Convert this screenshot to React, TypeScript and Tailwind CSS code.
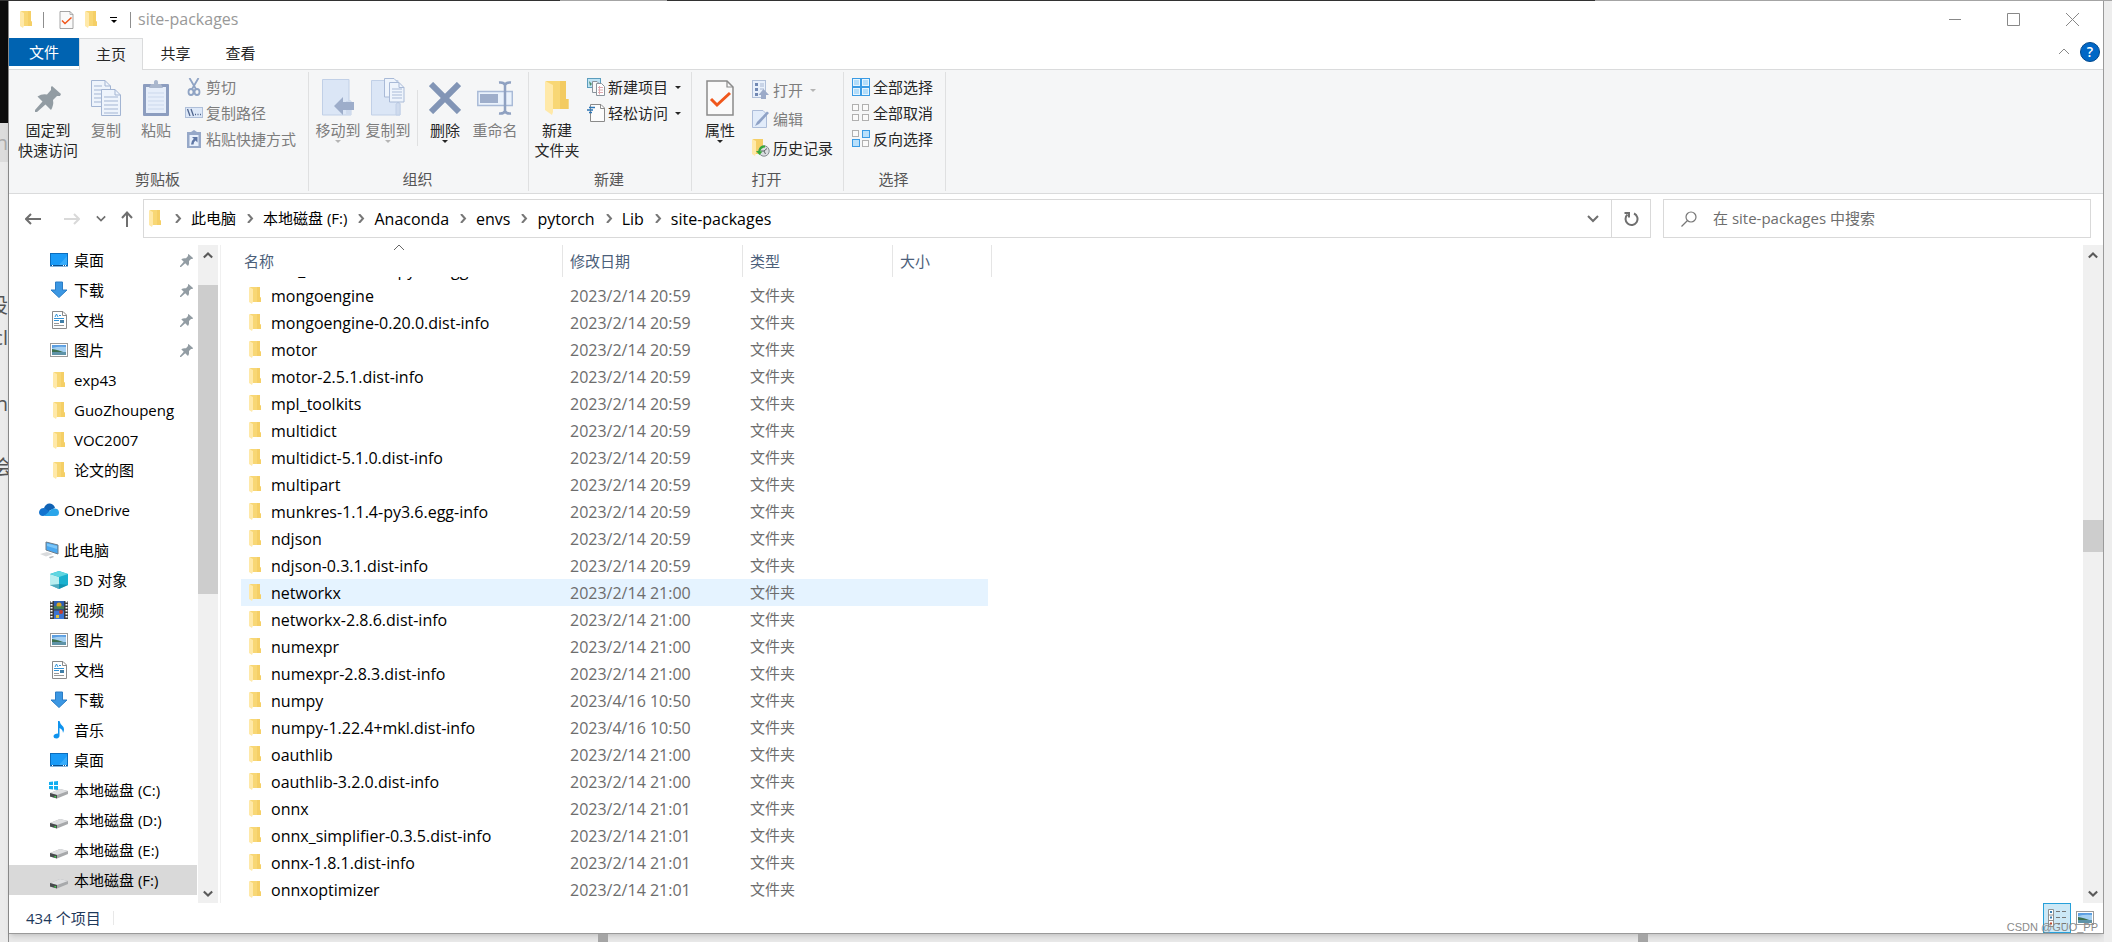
import type { ReactNode } from "react";

type IconProps = { className?: string };

const FolderIcon = ({ className = "w-3 h-[17px]" }: IconProps) => (
    <svg viewBox="0 0 12 17" className={className}>
        <path d="M1 0H11V10.5H12V15H4Z" fill="#f8d775" />
        <path d="M8 0H11V10.5H12V15H8Z" fill="#f5cf66" />
        <path d="M0 0L4 2V14.5L3 17L0 15Z" fill="#ffe9a9" />
    </svg>
);

const LargeFolderIcon = () => (
    <svg viewBox="0 0 24 36" className="w-6 h-9">
        <path d="M1 1H21V19H23.5V29H7Z" fill="#f8d775" />
        <path d="M15 1H21V19H23.5V29H15Z" fill="#f3cb62" />
        <path d="M0 1L8 5V32L7 35L0 30Z" fill="#ffe9a9" />
    </svg>
);

const CheckDocIcon = ({ className }: IconProps) => (
    <svg viewBox="0 0 28 36" className={className} fill="none">
        <path d="M1 1H21L27 7V35H1Z" fill="#fafafa" stroke="#8a8a8a" strokeWidth="1.5" />
        <path d="M21 1V7H27" stroke="#8a8a8a" strokeWidth="1.2" />
        <path d="M5 19L11 25L24 13" stroke="#f0571c" strokeWidth="3" />
    </svg>
);

const PinIcon = ({ className }: IconProps) => (
    <svg viewBox="0 0 26 26" className={className} fill="#929ca3">
        <path d="M17 0L26 8L25 10L22 10L18 14Q19 19 16 24L10.5 18.5L2 26L0 26L0 24L7.5 15.5L2.5 10.5Q7 7.5 12 8.5L16 4L16 1Z" />
    </svg>
);

const CopyIcon = () => (
    <svg viewBox="0 0 30 36" className="w-[30px] h-9" fill="#eef4fc" stroke="#a3b5d3">
        <path d="M.5.5H14L19.5 6V26.5H.5Z" />
        <path d="M14 .5V6H19.5M3 6H11M3 10H11M3 14H11M3 18H11M3 22H11" fill="none" />
        <path d="M10.5 9.5H24L29.5 15V35.5H10.5Z" />
        <path d="M24 9.5V15H29.5M13 17H27M13 21H27M13 25H27M13 29H27M13 33H27" fill="none" />
    </svg>
);

const PasteIcon = () => (
    <svg viewBox="0 0 26 36" className="w-[26px] h-9">
        <rect y="4" width="26" height="32" rx="1" fill="#8c9dbf" />
        <rect x="3" y="7" width="20" height="26" fill="#e6eefa" />
        <path d="M5 13H21M5 17H21M5 21H21M5 25H21M5 29H21" stroke="#cbd8ec" />
        <path d="M6 8L8 4H11Q10.5 0 13 0T15 4H18L20 8Z" fill="#aab7cd" />
    </svg>
);

const ScissorsIcon = () => (
    <svg viewBox="0 0 18 18" className="w-[18px] h-[18px]" fill="none" stroke="#8fa3c4">
        <path d="M4.5 0L11.5 12M13.5 0L6.5 12" strokeWidth="1.8" />
        <ellipse cx="6" cy="14" rx="2.5" ry="3" strokeWidth="1.8" />
        <ellipse cx="12" cy="14" rx="2.5" ry="3" strokeWidth="1.8" />
    </svg>
);

const CopyPathIcon = () => (
    <svg viewBox="0 0 18 18" className="w-[18px] h-[18px]">
        <rect x=".5" y="3.5" width="17" height="10" fill="#dde8f8" stroke="#afbfd9" />
        <path d="M2.5 5L5 12M6 5L8.5 12" stroke="#51668f" strokeWidth="1.3" />
        <path d="M10 10.5h1M12.5 10.5h1M15 10.5h1" stroke="#51668f" strokeWidth="1.3" />
    </svg>
);

const PasteShortcutIcon = () => (
    <svg viewBox="0 0 18 18" className="w-[18px] h-[18px]">
        <path d="M2 2H6L9 0L12 2H16V18H2Z" fill="#96a8c8" />
        <rect x="4.5" y="5" width="9" height="11" fill="#e8f0fb" />
        <path d="M7 7H12.5V12.5L10.5 10.5Q8.5 12 8.5 14.5H6Q6 11 8.8 8.8Z" fill="#5f77a5" />
    </svg>
);

const MoveToIcon = () => (
    <svg viewBox="0 0 32 38" className="w-8 h-[38px]">
        <path d="M.5 1.5H27V23H29V37H.5Z" fill="#dbe6f6" stroke="#c1d0e7" />
        <path d="M24 23H29V37H24Z" fill="#cfdbee" />
        <path d="M12 28L21 19V24H32V32H21V37Z" fill="#9dadca" />
    </svg>
);

const CopyToIcon = () => (
    <svg viewBox="0 0 34 38" className="w-[34px] h-[38px]" stroke="#a9bad7">
        <path d="M.5 2.5H27V25H29V37H.5Z" fill="#dbe6f6" stroke="#c1d0e7" />
        <path d="M25 37V26Q27 23 29 26V37Z" fill="#cfdbee" stroke="#c1d0e7" />
        <path d="M13.5.5H23L27.5 5V19H13.5Z" fill="#eef4fc" />
        <path d="M18.5 4.5H28L33 9.5V24H18.5Z" fill="#eef4fc" />
        <path d="M28 4.5V9.5H33M21 11H31M21 14H31M21 17H31M21 20H31" fill="none" />
    </svg>
);

const DeleteIcon = () => (
    <svg viewBox="0 0 32 32" className="w-8 h-8 mb-0.5">
        <path d="M2 2L30 30M30 2L2 30" stroke="#8295b6" strokeWidth="6" />
    </svg>
);

const RenameIcon = () => (
    <svg viewBox="0 0 36 34" className="w-9 h-[34px] mb-px">
        <rect x=".8" y="10.5" width="34.5" height="14" fill="#eaf2fc" stroke="#a9bad7" strokeWidth="1.5" />
        <rect x="3" y="13" width="18" height="9" fill="#9eaecb" />
        <path d="M22 1.5Q27 1 28 4Q29 1 34 1.5M28 4V30M22 32.5Q27 33 28 30Q29 33 34 32.5" fill="none" stroke="#8fa1c1" strokeWidth="2.5" />
    </svg>
);

const NewItemIcon = () => (
    <svg viewBox="0 0 18 18" className="w-[18px] h-[18px]" stroke="#8b949c">
        <rect x=".5" y=".5" width="13" height="9" fill="#bfe3f4" stroke="#5b9dbd" />
        <path d="M2 3L5 6L3 8Z" fill="#4e8f6a" stroke="none" />
        <path d="M5.5 3.5H10L12.5 6V14.5H5.5Z" fill="#f8f8f8" />
        <path d="M9.5 5.5H14.5L17.5 8.5V17.5H9.5Z" fill="#fff" />
        <path d="M11 9.5H16M11 12H16M11 14.5H16M12.5 8V16.5" stroke="#dfa9ae" />
    </svg>
);

const EasyAccessIcon = () => (
    <svg viewBox="0 0 18 18" className="w-[18px] h-[18px]" fill="none">
        <path d="M3.5.5H14L17.5 4V17.5H3.5Z" fill="#fcfcfc" stroke="#8a8a8a" />
        <path d="M13.5.5V4.5H17.5" stroke="#8a8a8a" />
        <path d="M2 3.5H8M0 6H6M2 8.5H5" stroke="#2d76b5" strokeWidth="1.5" />
    </svg>
);

const OpenIcon = () => (
    <svg viewBox="0 0 18 20" className="w-[18px] h-5">
        <rect x=".5" y=".5" width="13" height="17" fill="#e8f0fb" stroke="#b0bfd8" />
        <path d="M3 3H6V6H3ZM3 8H6V11H3ZM3 13H6V16H3Z" fill="#7188b3" />
        <path d="M8 4H12M8 6H12M8 9H12" stroke="#a9b8d3" />
        <path d="M11.5 9L17 15H14V19H9V15H6.5Z" fill="#9baac8" />
    </svg>
);

const EditIcon = () => (
    <svg viewBox="0 0 18 18" className="w-[18px] h-[18px]">
        <path d="M.5.5H11L14.5 4V17.5H.5Z" fill="#e2ecfa" stroke="#adbdd9" />
        <path d="M3 16L5 12L15 1.5L17 3L7 14Z" fill="#8fa2c6" />
    </svg>
);

const HistoryIcon = () => (
    <svg viewBox="0 0 18 18" className="w-[18px] h-[18px]">
        <path d="M1 0H11V15H3Z" fill="#f5cf66" />
        <path d="M0 0L4 2V14L3 17L0 15Z" fill="#ffe9a9" />
        <circle cx="12" cy="12" r="5.2" fill="#dadde0" stroke="#868c90" />
        <path d="M12 12L15 9.5M12 12H9M12 12L13.5 15" stroke="#5f6569" />
        <path d="M13 6.5Q7 6 6.5 12H4L7.5 16L10.5 12.5H8.5Q8.5 9 13 8.5Z" fill="#35a83a" />
    </svg>
);

const squares = [
    [0, 0],
    [10, 0],
    [0, 10],
    [10, 10],
];

const SelectIcon = ({ active }: { active: number[] }) => (
    <svg viewBox="0 0 18 18" className="w-[18px] h-[18px]">
        {active.length === 4 ? (
            <>
                <rect width="18" height="18" fill="#3b9be4" />
                <path d="M1 1H8V8H1ZM10 1H17V8H10ZM1 10H8V17H1ZM10 10H17V17H10Z" fill="#e6f5fe" />
                <path d="M2 2H7V7H2ZM11 2H16V7H11ZM2 11H7V16H2ZM11 11H16V16H11Z" fill="#b3ddfa" />
            </>
        ) : (
            squares.map(([x, y], i) =>
                active.includes(i) ? (
                    <rect key={i} x={x + 0.5} y={y + 0.5 - (y ? 1 : 0)} width="7" height="7" fill="#b9e0fb" stroke="#3b9be4" />
                ) : (
                    <rect key={i} x={x + 0.5} y={y + 0.5} width="6" height="6" fill="#fafafa" stroke="#b0b0b0" />
                )
            )
        )}
    </svg>
);

const DesktopIcon = () => (
    <svg viewBox="0 0 18 14" className="w-[18px] h-3.5">
        <rect x=".5" y=".5" width="17" height="12.5" fill="#1a9bf7" stroke="#0b6dbd" />
        <path d="M9 12L17 3V12Z" fill="#37acfb" />
        <path d="M1 12.5H17" stroke="#0a4f8c" />
        <path d="M2 12.5H3M13 12.5H14M15 12.5H16" stroke="#fff" />
    </svg>
);

const DownloadIcon = () => (
    <svg viewBox="0 0 18 18" className="w-[18px] h-[18px]">
        <path d="M5.5 1H12.5V9H17L9 16.5L1 9H5.5Z" fill="#3b97e3" stroke="#2b7dc6" />
    </svg>
);

const DocIcon = () => (
    <svg viewBox="0 0 18 18" className="w-[18px] h-[18px]" fill="none">
        <path d="M2.5.5H13L16.5 4V17.5H2.5Z" fill="#fff" stroke="#8b8b8b" />
        <path d="M12.5.5V4.5H16" stroke="#8b8b8b" />
        <path d="M5 6L6.5 3L8 6M9 4.5H11M4 7.5H14M4 9.5H9" stroke="#3293d8" />
        <rect x="10" y="9" width="4" height="3" fill="#3f7fa8" />
        <path d="M4 12.5H9M4 14.5H14" stroke="#9a9a9a" />
    </svg>
);

const PictureIcon = () => (
    <svg viewBox="0 0 18 14" className="w-[18px] h-3.5">
        <rect x=".5" y=".5" width="17" height="13" fill="#fff" stroke="#9b9b9b" />
        <rect x="2" y="2" width="14" height="10" fill="#a5d0f2" />
        <path d="M2 2H16V4Q9 3 2 5Z" fill="#5c9fe2" />
        <path d="M2 6Q7 6.5 16 10H2Z" fill="#3d7050" />
        <path d="M2 9H16V12H2Z" fill="#5f93a8" />
    </svg>
);

const CloudIcon = () => (
    <svg viewBox="0 0 20 14" className="w-5 h-3.5">
        <path d="M5 5Q7 0 11 .5Q15 1 16 5L8 9Z" fill="#0f62b4" />
        <path d="M4 13Q0 13 0 9Q1 4.5 5.5 5L14 11Z" fill="#1273cf" />
        <path d="M5 13L13 6Q19.5 4 20 9.5Q20 13 16.5 13Z" fill="#2aa5ea" />
    </svg>
);

const ComputerIcon = () => (
    <svg viewBox="0 0 20 18" className="w-5 h-[18px]">
        <path d="M7 1L19 4V13L7 9Z" fill="#4aa8f0" stroke="#6d7c89" />
        <path d="M8 2.5L18 5V8L8 5Z" fill="#7cc6f8" />
        <path d="M1 13L8 11L14 13L7 15.5Z" fill="#d9dbdd" />
        <path d="M10 16L14 15L15 16L11 17.5Z" fill="#b0b4b8" />
    </svg>
);

const CubeIcon = () => (
    <svg viewBox="0 0 18 18" className="w-[18px] h-[18px]">
        <path d="M0 3L9 0L18 3V14L9 18L0 14Z" fill="#1ab1cf" />
        <path d="M0 3L9 6V18L0 14Z" fill="#b9eef0" />
        <path d="M0 3L9 0L18 3L9 6Z" fill="#5fd6e0" />
        <path d="M9 13L18 14L9 18L0 14Z" fill="#0b7f9d" opacity=".6" />
    </svg>
);

const VideoIcon = () => (
    <svg viewBox="0 0 18 18" className="w-[18px] h-[18px]">
        <rect width="18" height="18" fill="#3b3b3b" />
        <path d="M1.5 0V18M16.5 0V18" stroke="#fff" strokeWidth="2" strokeDasharray="1.5 1.5" />
        <rect x="4" width="10" height="8.5" fill="#2f5fb3" />
        <rect x="4" y="9.5" width="10" height="8.5" fill="#3c74d0" />
        <circle cx="9" cy="4" r="2.5" fill="#d9a520" />
        <circle cx="11" cy="11" r="2" fill="#c63c2c" />
        <path d="M4 5H14V8H4Z" fill="#4f8a3a" opacity=".7" />
        <path d="M6 14H9V17H6Z" fill="#e2c23a" />
    </svg>
);

const MusicIcon = () => (
    <svg viewBox="0 0 18 18" className="w-[18px] h-[18px]">
        <path d="M8 0H9.5Q10 3 13 5.5Q15 8 13 12Q13 8.5 9.5 7V14.5Q9.5 17 6.5 17.5Q3.5 17.5 3.5 15Q4 12.5 8 12.5Z" fill="#0f93ee" />
    </svg>
);

const DriveIcon = ({ system = false }: { system?: boolean }) => (
    <svg viewBox="0 0 20 18" className="w-5 h-[18px]">
        <path d="M1 12L11 8L19 10V13L8 17.5L1 15.5Z" fill="#a7a9ab" />
        <path d="M1 12L11 8L19 10L8 14Z" fill="#dedfe1" />
        <path d="M1 12L8 14V17.5L1 15.5Z" fill="#484b4e" />
        <path d="M5.5 15H7V16.5H5.5Z" fill="#3fdc4a" />
        {system && <path d="M0 1L4 .5V4H0ZM5 .5L9 0V4H5ZM0 5H4V8.5L0 8ZM5 5H9V9L5 8.5Z" fill="#12aef0" />}
    </svg>
);

const DetailsViewIcon = () => (
    <svg viewBox="0 0 18 18" className="w-[18px] h-[18px]">
        <path d="M.5.5H5.5V17.5H.5ZM.5 6H5.5M.5 11.5H5.5" fill="#fff" stroke="#909090" />
        <path d="M2 3H4M2 8.5H4" stroke="#3d7fb0" strokeWidth="2" />
        <path d="M2 14.5H4" stroke="#c0492f" strokeWidth="2" />
        <path d="M8 2.5H12M14 2.5H18M8 8.5H12M14 8.5H18M8 14.5H12M14 14.5H18" stroke="#777" />
    </svg>
);

const Chevron = ({ dir, className = "", stroke = 2 }: { dir: "up" | "down" | "right"; className?: string; stroke?: number }) => {
    const paths = { up: "M1 7L6 2L11 7", down: "M1 2L6 7L11 2", right: "M4 0L8 4.5L4 9" };
    return (
        <svg viewBox="0 0 12 9" className={`w-3 h-[9px] ${className}`} fill="none" stroke="currentColor" strokeWidth={stroke}>
            <path d={paths[dir]} />
        </svg>
    );
};

const Caret = ({ className = "" }: IconProps) => (
    <svg viewBox="0 0 6 3" className={`w-1.5 h-[3px] shrink-0 ${className}`} fill="currentColor">
        <path d="M0 0H6L3 3Z" />
    </svg>
);

type BigButtonProps = {
    icon: ReactNode;
    lines: string[];
    width: string;
    disabled?: boolean;
    caret?: boolean;
};

const BigButton = ({ icon, lines, width, disabled, caret }: BigButtonProps) => (
    <button
        disabled={disabled}
        className={`flex flex-col items-center shrink-0 ${width} ${disabled ? "text-[#7d7d7d]" : "text-[#262626]"}`}
    >
        <span className="flex items-end justify-center h-11 mb-1">{icon}</span>
        {lines.map((line) => (
            <span key={line} className="leading-5 whitespace-nowrap">
                {line}
            </span>
        ))}
        {caret && <Caret className={disabled ? "text-[#b5b5b5]" : ""} />}
    </button>
);

const SmallButton = ({ icon, label, disabled, caret }: { icon: ReactNode; label: string; disabled?: boolean; caret?: boolean }) => (
    <button
        disabled={disabled}
        className={`flex items-center gap-[3px] h-[26px] whitespace-nowrap ${disabled ? "text-[#7d7d7d]" : "text-[#262626]"}`}
    >
        {icon}
        {label}
        {caret && <Caret className={disabled ? "ml-1 text-[#b5b5b5]" : "ml-1"} />}
    </button>
);

const RibbonGroup = ({ title, width, children }: { title: string; width: string; children: ReactNode }) => (
    <section className={`flex flex-col shrink-0 my-0.5 border-r border-[#dfe0e1] ${width}`}>
        <div className="flex flex-1">{children}</div>
        <div className="h-6 pr-0.5 leading-6 text-center text-[#555]">{title}</div>
    </section>
);

type NavItem = { label: string; icon: ReactNode; pinned?: boolean; root?: boolean; selected?: boolean };

const navItems: NavItem[] = [
    { label: "桌面", icon: <DesktopIcon />, pinned: true },
    { label: "下载", icon: <DownloadIcon />, pinned: true },
    { label: "文档", icon: <DocIcon />, pinned: true },
    { label: "图片", icon: <PictureIcon />, pinned: true },
    { label: "exp43", icon: <FolderIcon /> },
    { label: "GuoZhoupeng", icon: <FolderIcon /> },
    { label: "VOC2007", icon: <FolderIcon /> },
    { label: "论文的图", icon: <FolderIcon /> },
    { label: "OneDrive", icon: <CloudIcon />, root: true },
    { label: "此电脑", icon: <ComputerIcon />, root: true },
    { label: "3D 对象", icon: <CubeIcon /> },
    { label: "视频", icon: <VideoIcon /> },
    { label: "图片", icon: <PictureIcon /> },
    { label: "文档", icon: <DocIcon /> },
    { label: "下载", icon: <DownloadIcon /> },
    { label: "音乐", icon: <MusicIcon /> },
    { label: "桌面", icon: <DesktopIcon /> },
    { label: "本地磁盘 (C:)", icon: <DriveIcon system /> },
    { label: "本地磁盘 (D:)", icon: <DriveIcon /> },
    { label: "本地磁盘 (E:)", icon: <DriveIcon /> },
    { label: "本地磁盘 (F:)", icon: <DriveIcon />, selected: true },
];

const files = [
    ["mongoengine", "2023/2/14 20:59"],
    ["mongoengine-0.20.0.dist-info", "2023/2/14 20:59"],
    ["motor", "2023/2/14 20:59"],
    ["motor-2.5.1.dist-info", "2023/2/14 20:59"],
    ["mpl_toolkits", "2023/2/14 20:59"],
    ["multidict", "2023/2/14 20:59"],
    ["multidict-5.1.0.dist-info", "2023/2/14 20:59"],
    ["multipart", "2023/2/14 20:59"],
    ["munkres-1.1.4-py3.6.egg-info", "2023/2/14 20:59"],
    ["ndjson", "2023/2/14 20:59"],
    ["ndjson-0.3.1.dist-info", "2023/2/14 20:59"],
    ["networkx", "2023/2/14 21:00"],
    ["networkx-2.8.6.dist-info", "2023/2/14 21:00"],
    ["numexpr", "2023/2/14 21:00"],
    ["numexpr-2.8.3.dist-info", "2023/2/14 21:00"],
    ["numpy", "2023/4/16 10:50"],
    ["numpy-1.22.4+mkl.dist-info", "2023/4/16 10:50"],
    ["oauthlib", "2023/2/14 21:00"],
    ["oauthlib-3.2.0.dist-info", "2023/2/14 21:00"],
    ["onnx", "2023/2/14 21:01"],
    ["onnx_simplifier-0.3.5.dist-info", "2023/2/14 21:01"],
    ["onnx-1.8.1.dist-info", "2023/2/14 21:01"],
    ["onnxoptimizer", "2023/2/14 21:01"],
];

const crumbs = ["此电脑", "本地磁盘 (F:)", "Anaconda", "envs", "pytorch", "Lib", "site-packages"];

const TitleBar = () => (
    <header className="flex items-center h-[37px] pl-[11px]">
        <FolderIcon />
        <span className="w-px h-4 ml-[11px] bg-[#8e8e8e]" />
        <button aria-label="属性" className="ml-[15px]">
            <CheckDocIcon className="w-[15px] h-[18px]" />
        </button>
        <button aria-label="新建文件夹" className="ml-[11px]">
            <FolderIcon />
        </button>
        <button aria-label="自定义快速访问工具栏" className="ml-[13px] flex flex-col items-center gap-0.5 text-black">
            <span className="w-[7px] h-px bg-black" />
            <Caret />
        </button>
        <span className="w-px h-4 ml-[13px] bg-[#8e8e8e]" />
        <h1 className="ml-[7px] pb-0.5 text-base text-[#999]">site-packages</h1>
        <div className="flex items-center ml-auto pr-6 gap-[46px] text-[#888]">
            <button aria-label="最小化">
                <svg viewBox="0 0 12 12" className="w-3 h-3" stroke="currentColor"><path d="M0 5.5H12" /></svg>
            </button>
            <button aria-label="最大化">
                <svg viewBox="0 0 13 13" className="w-[13px] h-[13px]" fill="none" stroke="currentColor"><path d="M.5.5H12.5V12.5H.5Z" /></svg>
            </button>
            <button aria-label="关闭">
                <svg viewBox="0 0 13 13" className="w-[13px] h-[13px]" stroke="currentColor"><path d="M0 0L13 13M13 0L0 13" /></svg>
            </button>
        </div>
    </header>
);

const Tabs = () => (
    <nav className="flex h-8 text-[#262626] border-b border-[#dadbdc]">
        <button className="w-[70px] h-7 bg-[#0063b1] text-white">文件</button>
        <button className="w-16 h-8 border border-b-0 border-[#dadbdc] bg-[#f5f6f7]">主页</button>
        <button className="w-[65px]">共享</button>
        <button className="w-[65px]">查看</button>
        <div className="flex items-center gap-2.5 ml-auto pr-[3px] pb-1">
            <button aria-label="最小化功能区" className="text-[#888]">
                <Chevron dir="up" stroke={1} />
            </button>
            <button aria-label="帮助" className="w-5 h-5 rounded-full border border-[#00478c] bg-[#0067c6] text-white text-sm leading-4 font-semibold">
                ?
            </button>
        </div>
    </nav>
);

const Ribbon = () => (
    <div className="flex h-[124px] bg-[#f5f6f7] border-b border-[#dadbdc]">
        <RibbonGroup title="剪贴板" width="w-[300px]">
            <BigButton width="w-[70px] ml-1" lines={["固定到", "快速访问"]} icon={<PinIcon className="w-[26px] h-[26px] mb-1" />} />
            <BigButton width="w-[50px] -ml-0.5" disabled lines={["复制"]} icon={<CopyIcon />} />
            <BigButton width="w-[50px]" disabled lines={["粘贴"]} icon={<PasteIcon />} />
            <div className="flex flex-col ml-1 pt-0.5">
                <SmallButton disabled label="剪切" icon={<ScissorsIcon />} />
                <SmallButton disabled label="复制路径" icon={<CopyPathIcon />} />
                <SmallButton disabled label="粘贴快捷方式" icon={<PasteShortcutIcon />} />
            </div>
        </RibbonGroup>
        <RibbonGroup title="组织" width="w-[220px]">
            <BigButton width="w-[50px] ml-1" disabled caret lines={["移动到"]} icon={<MoveToIcon />} />
            <BigButton width="w-[50px]" disabled caret lines={["复制到"]} icon={<CopyToIcon />} />
            <span className="w-px h-14 mt-[18px] ml-1 bg-[#dfe0e1]" />
            <BigButton width="w-[50px] ml-0.5" caret lines={["删除"]} icon={<DeleteIcon />} />
            <BigButton width="w-[50px]" disabled lines={["重命名"]} icon={<RenameIcon />} />
        </RibbonGroup>
        <RibbonGroup title="新建" width="w-[163px]">
            <BigButton width="w-[50px] ml-[3px]" lines={["新建", "文件夹"]} icon={<LargeFolderIcon />} />
            <div className="flex flex-col ml-[5px] pt-0.5">
                <SmallButton caret label="新建项目" icon={<NewItemIcon />} />
                <SmallButton caret label="轻松访问" icon={<EasyAccessIcon />} />
            </div>
        </RibbonGroup>
        <RibbonGroup title="打开" width="w-[152px]">
            <BigButton width="w-[50px] ml-[3px]" caret lines={["属性"]} icon={<CheckDocIcon className="w-7 h-9" />} />
            <div className="flex flex-col gap-[3px] ml-[7px] pt-[5px]">
                <SmallButton disabled caret label="打开" icon={<OpenIcon />} />
                <SmallButton disabled label="编辑" icon={<EditIcon />} />
                <SmallButton label="历史记录" icon={<HistoryIcon />} />
            </div>
        </RibbonGroup>
        <RibbonGroup title="选择" width="w-[102px]">
            <div className="flex flex-col ml-2 pt-0.5">
                <SmallButton label="全部选择" icon={<SelectIcon active={[0, 1, 2, 3]} />} />
                <SmallButton label="全部取消" icon={<SelectIcon active={[]} />} />
                <SmallButton label="反向选择" icon={<SelectIcon active={[1, 2]} />} />
            </div>
        </RibbonGroup>
    </div>
);

const AddressBar = () => (
    <div className="flex items-center h-[51px] pr-3 pb-0.5">
        <div className="flex items-center w-[134px] pl-4 text-[#6f6f6f]">
            <button aria-label="后退">
                <svg viewBox="0 0 16 12" className="w-4 h-3" fill="none" stroke="currentColor" strokeWidth="2"><path d="M16 6H1M6 1L1 6L6 11" /></svg>
            </button>
            <button aria-label="前进" disabled className="ml-[23px] text-[#d9d9d9]">
                <svg viewBox="0 0 16 12" className="w-4 h-3" fill="none" stroke="currentColor" strokeWidth="2"><path d="M0 6H15M10 1L15 6L10 11" /></svg>
            </button>
            <button aria-label="最近位置" className="ml-4">
                <Chevron dir="down" className="w-[10px]" />
            </button>
            <button aria-label="上移" className="ml-[15px]">
                <svg viewBox="0 0 12 16" className="w-3 h-4" fill="none" stroke="currentColor" strokeWidth="2"><path d="M6 16V1.5M1 7L6 1.5L11 7" /></svg>
            </button>
        </div>
        <div className="flex flex-1 items-center h-[39px] border border-[#d9d9d9]">
            <FolderIcon className="w-3 h-[17px] ml-[5px] mr-[3px]" />
            {crumbs.map((crumb) => (
                <a key={crumb} href="#" className="flex items-center whitespace-nowrap text-base text-black">
                    <Chevron dir="right" className="ml-2 mr-[7px] text-[#777]" />
                    <span className={crumb.includes("电脑") || crumb.includes("磁盘") ? "text-[15px]" : ""}>{crumb}</span>
                </a>
            ))}
            <button aria-label="上一个位置" className="ml-auto mr-3 text-[#6f6f6f]">
                <Chevron dir="down" />
            </button>
            <button aria-label="刷新" className="flex items-center justify-center w-[39px] h-full border-l border-[#d9d9d9] text-[#6f6f6f]">
                <svg viewBox="0 0 16 16" className="w-4 h-4" fill="none" stroke="currentColor" strokeWidth="2">
                    <path d="M11 2.5A6 6 0 1 1 4.500 3.500" />
                    <path d="M1.5 2H6V6.500" />
                </svg>
            </button>
        </div>
        <label className="flex items-center w-[428px] h-[39px] ml-3 pl-[17px] gap-4 border border-[#d9d9d9]">
            <svg viewBox="0 0 16 16" className="w-4 h-4 text-[#777]" fill="none" stroke="currentColor" strokeWidth="1.2">
                <circle cx="10" cy="6" r="5" />
                <path d="M6.5 9.5L.5 15.5" />
            </svg>
            <input
                type="text"
                aria-label="搜索"
                placeholder="在 site-packages 中搜索"
                className="flex-1 outline-none placeholder:text-[#6d6d6d]"
            />
        </label>
    </div>
);

const NavPane = () => (
    <aside className="w-[188px] shrink-0">
        <ul>
            {navItems.map((item, i) => (
                <li
                    key={i}
                    className={`flex items-center h-[30px] ${item.root ? "mt-2.5 pl-[29px]" : "pl-10"} ${item.selected ? "bg-[#d9d9d9]" : ""}`}
                >
                    <span className={`flex items-center justify-center shrink-0 ${item.root ? "w-[22px] mr-1" : "w-5 mr-[5px]"}`}>{item.icon}</span>
                    <a href="#" className="leading-[30px] whitespace-nowrap text-black">
                        {item.label}
                    </a>
                    {item.pinned && <PinIcon className="w-[13px] h-[13px] ml-auto mr-1" />}
                </li>
            ))}
        </ul>
    </aside>
);

const ScrollBar = ({ offset, thumb }: { offset: string; thumb: string }) => (
    <div className="flex flex-col w-5 shrink-0 bg-[#f0f0f0] text-[#5a5a5a]">
        <span className="flex items-center justify-center h-5">
            <Chevron dir="up" className="w-[10px]" stroke={2.5} />
        </span>
        <div className={`flex-1 ${offset}`}>
            <div className={`w-full bg-[#cdcdcd] ${thumb}`} />
        </div>
        <span className="flex items-center justify-center h-5">
            <Chevron dir="down" className="w-[10px]" stroke={2.5} />
        </span>
    </div>
);

const FileTable = () => (
    <table className="table-fixed w-[751px] text-left border-separate border-spacing-0">
        <colgroup>
            <col className="w-[322px]" />
            <col className="w-[180px]" />
            <col className="w-[150px]" />
            <col className="w-[99px]" />
        </colgroup>
        <thead>
            <tr className="h-8 text-[#4c607a]">
                <th className="relative p-0 pl-[3px] font-normal border-r border-[#e5e5e5]">
                    名称
                    <Chevron dir="up" stroke={1} className="absolute left-[152px] -top-0.5 text-[#666]" />
                </th>
                <th className="p-0 pl-[7px] font-normal border-r border-[#e5e5e5]">修改日期</th>
                <th className="p-0 pl-[7px] font-normal border-r border-[#e5e5e5]">类型</th>
                <th className="p-0 pl-[7px] font-normal border-r border-[#e5e5e5]">大小</th>
            </tr>
        </thead>
        <tbody>
            <tr>
                <td colSpan={4} className="p-0">
                    {/* row scrolled halfway under the header */}
                    <div className="flex flex-col justify-end h-[5px] overflow-hidden">
                        <span className="block shrink-0 h-[25px] leading-[27px] pl-[30px] text-base text-black">mkl_random-1.1-py3.6.egg-info</span>
                    </div>
                </td>
            </tr>
            {files.map(([name, date]) => (
                <tr key={name} className={`text-[#6d6d6d] ${name === "networkx" ? "[&>td]:bg-[#e5f3ff]" : ""}`}>
                    <td className="p-0">
                        <span className="flex items-center gap-2.5 h-[27px] pl-2 text-base leading-[27px] text-black">
                            <FolderIcon />
                            <span className="pt-0.5">{name}</span>
                        </span>
                    </td>
                    <td className="p-0 pl-[7px] text-base">
                        <div className="h-[27px] leading-[29px]">{date}</div>
                    </td>
                    <td className="p-0 pl-[7px]">
                        <div className="h-[27px] leading-[27px]">文件夹</div>
                    </td>
                    <td className="p-0 border-r-4 border-transparent bg-clip-padding" />
                </tr>
            ))}
        </tbody>
    </table>
);

const StatusBar = () => (
    <footer className="flex items-center h-[30px] pl-[17px] pr-[9px] text-[#1e395b]">
        <span>434 个项目</span>
        <span className="w-px h-3.5 ml-3 bg-[#e8e8e8]" />
        <div className="relative flex items-center gap-[5px] ml-auto">
            <button aria-label="详细信息" className="flex items-center justify-center w-7 h-[30px] border border-[#26a0da] bg-[#cce8f6]">
                <DetailsViewIcon />
            </button>
            <button aria-label="大缩略图">
                <PictureIcon />
            </button>
            <span className="absolute -right-1 -bottom-0.5 text-[11px] leading-4 whitespace-nowrap text-[#8a8a8a] font-['Liberation_Sans',sans-serif]">
                CSDN @GUO_PP
            </span>
        </div>
    </footer>
);

// Slivers of the page that stay visible behind the window.
const BackdropLeft = () => (
    <div className="flex flex-col items-end w-[9px] shrink-0 overflow-hidden bg-[#ebebeb] text-xl text-[#555] border-r border-[#8f8f8f]">
        <div className="w-full h-[122px] bg-[#0c0c0c]" />
        <div className="flex justify-end w-full h-[39px] leading-[39px] bg-[#dcdcdc] text-[#aaa]">n</div>
        <div className="mt-[129px] leading-[30px]">设</div>
        <div className="leading-[34px]">cl</div>
        <div className="mt-[34px] leading-[30px]">n</div>
        <div className="mt-[34px] leading-[30px] mr-[-5px]">会</div>
    </div>
);

const App = () => {
    return (
        <div className="flex flex-col min-h-screen bg-[#e9e9e9] text-[15px] font-['Open_Sans','Noto_Sans_CJK_SC',sans-serif]">
            <div className="flex h-px bg-[#333]">
                <span className="flex-1" />
                <span className="w-[107px] bg-[#a5a5a5]" />
                <span className="w-[928px]" />
                <span className="w-[517px] bg-[#a5a5a5]" />
            </div>
            <div className="flex flex-1">
                <BackdropLeft />
                <div className="flex flex-col flex-1 min-w-0">
                    <main className="flex flex-col border-r border-b border-[#9a9a9a] bg-white shadow-md">
                        <TitleBar />
                        <Tabs />
                        <Ribbon />
                        <AddressBar />
                        <div className="flex">
                            <NavPane />
                            <span className="w-px" />
                            <ScrollBar offset="pt-5" thumb="h-[309px]" />
                            <div className="flex-1 ml-0.5 pl-5 border-l border-[#f0f0f0]">
                                <FileTable />
                            </div>
                            <ScrollBar offset="pt-[255px]" thumb="h-8" />
                        </div>
                        <StatusBar />
                    </main>
                    <div className="flex pl-[589px] gap-[1030px]">
                        <span className="w-2.5 h-2 bg-[#a5a5a5]" />
                        <span className="w-2.5 h-2 bg-[#a5a5a5]" />
                    </div>
                </div>
                <div className="w-2 shrink-0 bg-[#ededed]" />
            </div>
        </div>
    );
};

export default App;
